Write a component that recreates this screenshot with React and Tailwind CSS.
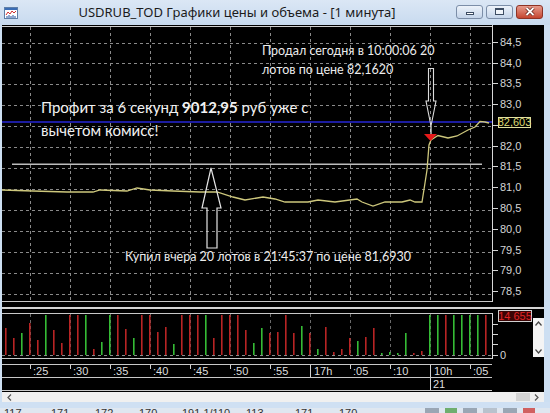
import React from "react";

const XS = [30, 70, 110, 150, 190, 230, 270, 310, 350, 390, 430, 470];
const YS = Array.from({ length: 13 }, (_, k) => 42.5 + k * 20.92);
const PRICES = ["84,5", "84,0", "83,5", "83,0", "82,5", "82,0", "81,5", "81,0", "80,5", "80,0", "79,5", "79,0", "78,5"];

const PRICE_LINE =
  "M2,190 L33,191 L67,192 L80,192 L93,192 L100,190 L127,191 L137,188 L150,190 L173,191 L200,192 L217,192 L233,197 L245,200 L263,197 L275,199 L285,202 L308,202 L318,200 L335,202 L357,199 L362,202 L373,206 L385,202 L402,202 L410,200 L415,202 L422,202 L425,183 L427,170 L429,145 L431,140 L438,135.5 L448,138 L457,136 L468,130 L475,127 L480,121.5 L485,122 L489,123";

// top of each volume bar + colour, one bar every 8px from x=5
const VOL =
  "328r 338r 333g 323r 340r 315g 330r 343r 315r 315r 315g 349r 342g 315g 315r 329r 338g 315r 315r 332r 327r 344g 315r 315r 315r 315g 338r 315r 315r 315r 330r 343g 328g 333r 332r 315r 333r 326g 333r 349g 327r 352r 349r 338r 341g 337r 328r 353g 352g 353g 333g 353r 351r 315g 315g 315r 315g 315g 315g 315g 315r"
    .split(" ")
    .map((s, i) => ({ x: 5 + i * 8, top: Number(s.slice(0, 3)), c: s[3] }));

const TIMES = [":25", ":30", ":35", ":40", ":45", ":50", ":55", "17h", ":05", ":10", "10h", ":05"];

function TitleBar() {
  return (
    <div className="h-[25px] flex items-center bg-linear-to-b from-[#dbe7f5] to-[#c8daef] pl-[4px] pr-[7px]">
      <svg width="14" height="12" viewBox="0 0 14 12" className="shrink-0">
        <rect x="0.5" y="0.5" width="13" height="11" fill="#ffffff" stroke="#5f7fa8" />
        <rect x="1" y="1" width="12" height="2" fill="#3b6db5" />
        <path d="M2,8 L4,5 L6,7 L8,4 L10,6 L12,4" fill="none" stroke="#d03030" strokeWidth="1" />
        <path d="M3,11 V9 M5,11 V8 M7,11 V9 M9,11 V8 M11,11 V9" stroke="#2050a0" strokeWidth="1" />
      </svg>
      <div className="flex-1 text-center text-[13px] text-[#1b1b1b] font-['Noto_Sans',sans-serif] leading-none pb-[1px]">
        USDRUB_TOD Графики цены и объема - [1 минута]
      </div>
      <div className="flex gap-[3px] pb-[2px]">
        <div className="w-[27px] h-[14px] rounded-[3px] border border-[#7c8ea8] bg-linear-to-b from-[#edf3fa] to-[#c5d5ea] flex items-end justify-center pb-[3px]">
          <div className="w-[8px] h-[3px] bg-white border border-[#3d4d63]" />
        </div>
        <div className="w-[27px] h-[14px] rounded-[3px] border border-[#7c8ea8] bg-linear-to-b from-[#edf3fa] to-[#c5d5ea] flex items-center justify-center">
          <div className="w-[9px] h-[7px] border border-[#3d4d63] border-t-2 bg-white/60" />
        </div>
        <div className="w-[27px] h-[14px] rounded-[3px] border border-[#8e3326] bg-linear-to-b from-[#e69a8c] to-[#c4442f] flex items-center justify-center">
          <svg width="10" height="9" viewBox="0 0 10 9">
            <path d="M1.5,1 L8.5,8 M8.5,1 L1.5,8" stroke="#5a1a12" strokeWidth="3.2" />
            <path d="M1.5,1 L8.5,8 M8.5,1 L1.5,8" stroke="#ffffff" strokeWidth="1.8" />
          </svg>
        </div>
      </div>
    </div>
  );
}

function MainPanel() {
  return (
    <div className="h-[277px] flex relative">
      <svg width="490" height="277" viewBox="2 25 490 277" className="shrink-0">
        {XS.map((x) => (
          <line key={x} x1={x + 0.5} x2={x + 0.5} y1="27" y2="301" stroke="#8a8a8a" strokeDasharray="3 3" />
        ))}
        {YS.map((y) => (
          <line key={y} x1="2" x2="492" y1={Math.round(y) + 0.5} y2={Math.round(y) + 0.5} stroke="#8a8a8a" strokeDasharray="3 3" />
        ))}
        <line x1="2" x2="492" y1="26.5" y2="26.5" stroke="#d0d0d0" />
        <line x1="2" x2="492" y1="301.5" y2="301.5" stroke="#c8c8c8" />
        <rect x="2" y="121" width="490" height="2" fill="#1c1ca0" />
        <rect x="12" y="163.5" width="470" height="1.5" fill="#bdbdbd" />
        <path d={PRICE_LINE} fill="none" stroke="#cdc77c" strokeWidth="1.3" />
        <polygon points="211,168 221,208 217,208 217,248 207,248 207,208 202,208" fill="none" stroke="#e4e4e4" strokeWidth="1.2" />
        <polygon points="428.5,68.5 433.5,68.5 433.5,101 436,101 431,126 426,101 428.5,101" fill="none" stroke="#dcdcdc" strokeWidth="1.1" />
        <line x1="431" x2="431" y1="126" y2="134" stroke="#f0f0f0" strokeWidth="1.2" />
        <polygon points="424,134 437,134 430.5,141" fill="#e51a1a" />
      </svg>

      <div className="w-[52px] border-l border-[#d8d8d8] flex flex-col pt-[7px] font-['Liberation_Sans',sans-serif] text-[11px] text-[#d4d4d4]">
        {PRICES.map((p) => (
          <div key={p} className="h-[20.92px] flex items-center leading-none">
            <span className="w-[5px] h-px bg-[#d4d4d4]" />
            <span className={`ml-[2px] ${p === "82,5" ? "invisible" : ""}`}>{p}</span>
          </div>
        ))}
      </div>

      <div className="absolute left-[496px] top-[92px] w-[33px] h-[11px] border border-[#e2e0a0] bg-black flex items-center justify-center whitespace-nowrap font-['Liberation_Sans',sans-serif] text-[11px] leading-none text-[#dcd872]">
        82,603
      </div>

      <div className="absolute left-[260px] top-[16px] font-['Lato',sans-serif] text-[12.5px] leading-[19px] text-[#ececec]">
        <div>Продал сегодня в 10:00:06 20</div>
        <div>лотов по цене 82,1620</div>
      </div>
      <div className="absolute left-[39px] top-[71px] font-['Lato',sans-serif] text-[15px] leading-[23px] text-[#f2f2f2]">
        <div>
          Профит за 6 секунд <b className="font-bold">9012,95</b> руб уже с
        </div>
        <div>вычетом комисс!</div>
      </div>
      <div className="absolute left-[123px] top-[224px] font-['Lato',sans-serif] text-[12.5px] leading-[16px] text-[#ececec]">
        Купил вчера 20 лотов в 21:45:37 по цене 81,6930
      </div>
    </div>
  );
}

function VolumePanel() {
  return (
    <div className="h-[46px] flex relative">
      <svg width="490" height="46" viewBox="2 313 490 46" className="shrink-0">
        {XS.map((x) => (
          <line key={x} x1={x + 0.5} x2={x + 0.5} y1="314" y2="355" stroke="#6a6a6a" strokeDasharray="3 3" />
        ))}
        <line x1="2" x2="492" y1="313.5" y2="313.5" stroke="#c8c8c8" />
        <line x1="2" x2="492" y1="358.5" y2="358.5" stroke="#c8c8c8" />
        {VOL.map((b) => (
          <rect key={b.x} x={b.x} y={b.top} width="1.6" height={355 - b.top} fill={b.c === "r" ? "#b82424" : "#35bb35"} />
        ))}
        <line x1="2" x2="492" y1="355.5" y2="355.5" stroke="#8a8a8a" strokeDasharray="3 3" />
      </svg>
      <div className="w-[52px] border-l border-[#d8d8d8] flex">
        <div className="w-[41px] relative font-['Liberation_Sans',sans-serif] text-[11px] leading-none text-[#d4d4d4]">
          <div className="absolute left-0 top-[11px] w-[5px] h-px bg-[#d4d4d4]" />
          <div className="absolute left-0 top-[21px] w-[5px] h-px bg-[#d4d4d4]" />
          <div className="absolute left-0 top-[31px] w-[5px] h-px bg-[#d4d4d4]" />
          <div className="absolute left-0 top-[37px] flex items-center h-[10px]">
            <span className="w-[5px] h-px bg-[#d4d4d4]" />
            <span className="ml-[2px]">0</span>
          </div>
        </div>
        <div className="w-[11px] h-[39px] mt-[5px] bg-[#f4f4f4] flex flex-col justify-between items-center py-[3px]">
          <svg width="7" height="5" viewBox="0 0 7 5">
            <path d="M0.5,4.5 L3.5,1 L6.5,4.5" fill="none" stroke="#444" strokeWidth="1.2" />
          </svg>
          <svg width="7" height="5" viewBox="0 0 7 5">
            <path d="M0.5,0.5 L3.5,4 L6.5,0.5" fill="none" stroke="#444" strokeWidth="1.2" />
          </svg>
        </div>
      </div>
      <div className="absolute left-[496px] top-[-3px] w-[34px] h-[12px] border border-[#d0d0d0] bg-[#3a0505] flex items-center justify-center whitespace-nowrap font-['Liberation_Sans',sans-serif] text-[11px] leading-none text-[#e02424]">
        14 655
      </div>
    </div>
  );
}

function TimeAxis() {
  return (
    <div className="h-[33px] pt-[5px] font-['Liberation_Sans',sans-serif] text-[11px] leading-none text-[#dedede]">
      <div className="w-[490px] h-[14px] border-y border-[#c8c8c8] flex overflow-hidden">
        <div className="w-[28px] shrink-0" />
        {TIMES.map((t, i) => {
          const major = t.endsWith("h");
          return (
            <div key={i} className={`w-[40px] shrink-0 relative flex items-center pl-[3px] ${major ? "border-l border-[#d0d0d0] pl-[2px]" : ""}`}>
              {!major && <div className="absolute left-0 top-0 w-px h-[4px] bg-[#d0d0d0]" />}
              {t}
            </div>
          );
        })}
      </div>
      <div className="w-[490px] h-[13px] border-b border-[#c8c8c8] flex">
        <div className="w-[428px] shrink-0" />
        <div className="border-l border-[#d0d0d0] pl-[2px] flex items-center">21</div>
      </div>
    </div>
  );
}

function HScroll() {
  return (
    <div className="h-[10px] bg-[#f0f0f0] flex items-center justify-between px-[5px] relative">
      <svg width="5" height="7" viewBox="0 0 5 7">
        <path d="M4,0.5 L1,3.5 L4,6.5" fill="none" stroke="#555" strokeWidth="1.2" />
      </svg>
      <div className="absolute left-[514px] top-[1px] w-[14px] h-[8px] bg-[#d4d4d4]" />
      <svg width="5" height="7" viewBox="0 0 5 7">
        <path d="M1,0.5 L4,3.5 L1,6.5" fill="none" stroke="#555" strokeWidth="1.2" />
      </svg>
    </div>
  );
}

export default function App() {
  const strip = ["117", "171", "172", "170", "191 1/110", "113", "171", "170"];
  const stripX = [4, 51, 95, 139, 182, 246, 295, 339];
  return (
    <div className="w-[550px] h-[413px] overflow-hidden bg-[#cddff2] flex flex-col">
      <TitleBar />
      <div className="flex-1 flex flex-col pl-[2px] pr-[6px]">
        <div className="bg-black flex flex-col">
          <MainPanel />
          <div className="h-[11px] flex flex-col pt-[5px]">
            <div className="h-[2px] bg-[#d4d4d4]" />
          </div>
          <VolumePanel />
          <TimeAxis />
        </div>
        <HScroll />
      </div>
      <div className="h-[6px] bg-[#cfe0f3]" />
      <div className="h-[5px] bg-[#dfe7f0] relative overflow-hidden font-['Liberation_Sans',sans-serif] text-[11px] leading-none text-[#333]">
        {strip.map((s, i) => (
          <span key={i} className="absolute top-[0px] whitespace-nowrap" style={{ left: stripX[i] }}>
            {s}
          </span>
        ))}
        <div className="absolute left-[425px] top-0 flex gap-[6px]">
          <span className="w-[14px] h-[5px] bg-[#9aa6b4]" />
          <span className="w-[12px] h-[5px] bg-[#6fae6f]" />
          <span className="w-[14px] h-[5px] bg-[#9aa6b4]" />
          <span className="w-[14px] h-[5px] bg-[#b8c2cd]" />
          <span className="w-[14px] h-[5px] bg-[#9aa6b4]" />
          <span className="w-[12px] h-[5px] bg-[#d06060]" />
        </div>
      </div>
    </div>
  );
}
